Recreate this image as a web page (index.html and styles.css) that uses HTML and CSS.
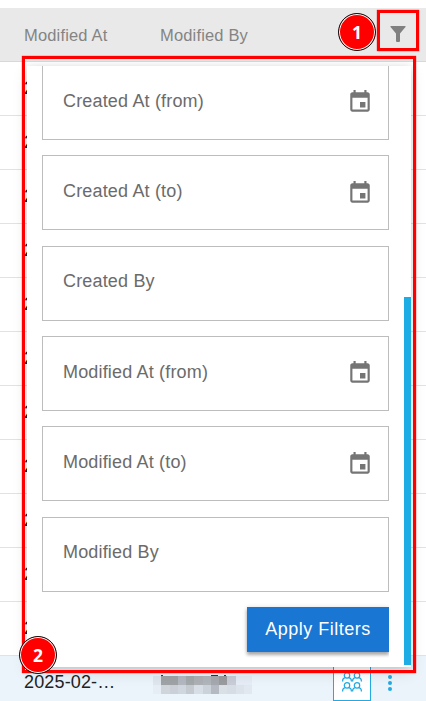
FILE: index.html
```html
<!DOCTYPE html>
<html lang="en">
<head>
<meta charset="utf-8">
<title>Filters</title>
<link rel="stylesheet" href="styles.css">
</head>
<body>
<svg class="defs" aria-hidden="true">
  <symbol id="calendar" viewBox="0 0 24 24"><path d="M17 12h-5v5h5v-5zM16 1v2H8V1H6v2H5c-1.11 0-1.99.9-1.99 2L3 19c0 1.1.89 2 2 2h14c1.1 0 2-.9 2-2V5c0-1.1-.9-2-2-2h-1V1h-2zm3 18H5V8h14v11z"/></symbol>
  <symbol id="person" viewBox="0 0 10 10"><circle cx="5" cy="3.4" r="2.7"/><path d="M.6 9.6V9c0-1.8 1-3 2.8-3.3M9.4 9.6V9c0-1.8-1-3-2.8-3.3"/></symbol>
</svg>
<main class="page">
  <header class="head">
    <span class="col">Modified At</span><span class="col">Modified By</span>
    <svg class="funnel" viewBox="0 0 16 16"><path d="M1 0h14q1 0 .5 1L10 7.5V15q0 1-1 1H7q-1 0-1-1V7.5L.5 1Q0 0 1 0z"/></svg>
  </header>
  <div class="row">2025</div><div class="row">2025</div><div class="row">2025</div><div class="row">2025</div>
  <div class="row">2025</div><div class="row">2025</div><div class="row">2025</div><div class="row">2025</div>
  <div class="row">2025</div><div class="row">2025</div><div class="row">2025</div>
  <div class="row selected">
    <span class="date">2025-02-…</span>
    <svg class="redacted" viewBox="0 0 99 19" shape-rendering="crispEdges">
      <path fill="#333" d="M8 -1h2v1H8zM58 -1h7v1h-7zM71 -1h2v1h-2z"/>
      <path fill="#dfe6ee" d="M0 0h8v9H0z"/><path fill="#9fa3a6" d="M8 0h17v9H8z"/><path fill="#b2b7c0" d="M25 0h8v9h-8z"/><path fill="#a3a8aa" d="M33 0h8v9h-8z"/><path fill="#adb1b6" d="M41 0h9v9h-9z"/><path fill="#b0b5bb" d="M50 0h8v9h-8z"/><path fill="#a5a9af" d="M58 0h8v9h-8z"/><path fill="#9a9b9f" d="M66 0h8v9h-8z"/><path fill="#c8ccd6" d="M74 0h9v9h-9z"/><path fill="#e6ecf6" d="M83 0h16v9H83z"/>
      <path fill="#e6edf5" d="M0 9h8v9H0z"/><path fill="#d0d5dc" d="M8 9h9v9H8z"/><path fill="#cbd0d8" d="M17 9h8v9h-8z"/><path fill="#d0d6dd" d="M25 9h8v9h-8z"/><path fill="#c5cad1" d="M33 9h8v9h-8z"/><path fill="#d7dee5" d="M41 9h9v9h-9z"/><path fill="#ccd2d9" d="M50 9h8v9h-8z"/><path fill="#b5b9c1" d="M58 9h8v9h-8z"/><path fill="#d9e1e6" d="M66 9h8v9h-8z"/><path fill="#d6dde4" d="M74 9h9v9h-9z"/><path fill="#dce3eb" d="M83 9h8v9h-8z"/><path fill="#e1e8f0" d="M91 9h8v9h-8z"/>
    </svg>
    <span class="people"><svg viewBox="0 0 20 20"><use href="#person" width="10" height="10"/><use href="#person" x="10" width="10" height="10"/><use href="#person" y="10" width="10" height="10"/><use href="#person" x="10" y="10" width="10" height="10"/></svg></span>
    <span class="more"><i></i><i></i><i></i></span>
  </div>
  <section class="panel">
    <div class="fields">
      <div class="field"><span>Created At (from)</span><svg class="cal"><use href="#calendar"/></svg></div>
      <div class="field"><span>Created At (to)</span><svg class="cal"><use href="#calendar"/></svg></div>
      <div class="field"><span>Created By</span></div>
      <div class="field"><span>Modified At (from)</span><svg class="cal"><use href="#calendar"/></svg></div>
      <div class="field"><span>Modified At (to)</span><svg class="cal"><use href="#calendar"/></svg></div>
      <div class="field"><span>Modified By</span></div>
      <button class="apply">Apply Filters</button>
    </div>
    <div class="thumb"></div>
  </section>
  <div class="frame frame-panel"></div>
  <div class="frame frame-icon"></div>
  <div class="badge one">1</div>
  <div class="badge two">2</div>
</main>
</body>
</html>
```
FILE: styles.css
```css
* { box-sizing: border-box; }
body { margin: 0; font-family: "Liberation Sans", Arial, sans-serif; background: #fff; }
.defs { position: absolute; width: 0; height: 0; }
.page { position: relative; width: 426px; height: 701px; padding-top: 8px; overflow: hidden; }
.head { display: flex; align-items: center; height: 54px; padding-left: 24px; background: #e9e9e9; border-bottom: 1px solid #d8d8d8; font-size: 16.5px; letter-spacing: .16px; color: #848484; }
.col { width: 136px; padding-top: 1px; }
.funnel { width: 16px; height: 16px; margin-left: 94px; fill: #808080; position: relative; top: -1px; }
.row { height: 54px; padding-left: 24px; line-height: 53px; border-bottom: 1px solid #e2e2e2; font-size: 18px; color: #222; }
.selected { display: flex; height: 54px; background: #ebf3fb; }
.date { width: 129px; letter-spacing: .15px; }
.redacted { width: 99px; height: 19px; margin-top: 20px; overflow: visible; }
.people { display: flex; justify-content: center; width: 38px; height: 45px; margin-left: 81px; padding-top: 15px; background: #fff; border: 1px solid #22aae2; }
.people svg { width: 20px; height: 20px; fill: none; stroke: #22aae2; stroke-width: 1.2; }
.more { display: flex; flex-direction: column; gap: 2px; margin: 19px 0 0 17px; }
.more i { width: 4px; height: 4px; border-radius: 50%; background: #22aae2; }
.panel { position: absolute; left: 27px; top: 66px; width: 384px; height: 601px; display: flex; justify-content: space-between; background: #fff; box-shadow: 0 5px 14px rgba(0,0,0,.13), 0 1px 7px rgba(0,0,0,.1); }
.fields { display: flex; flex-direction: column; justify-content: flex-end; gap: 15.35px; width: 362px; padding: 0 0 15px 15px; overflow: hidden; }
.field { display: flex; flex: none; justify-content: space-between; align-items: center; width: 347px; height: 75px; padding: 0 15px 0 20px; border: 1px solid #bdbdbd; color: #6b6b6b; font-size: 18px; letter-spacing: .17px; }
.field span { position: relative; top: -1.4px; }
.cal { width: 26px; height: 26px; fill: #757575; }
.apply { flex: none; align-self: flex-end; width: 142px; height: 45px; padding: 0; border: 0; background: #1976d2; color: #fff; font: 18px "Liberation Sans", Arial, sans-serif; letter-spacing: .5px; box-shadow: 0 3px 3px rgba(0,0,0,.25), 0 1px 5px rgba(0,0,0,.2); }
.thumb { align-self: flex-end; width: 7px; height: 368px; margin-bottom: 2px; background: #1dace4; }
.frame { position: absolute; border: 3px solid #f00; box-shadow: 0 0 1px #f00; }
.frame-panel { left: 22px; top: 56px; width: 394px; height: 617px; }
.frame-icon { left: 377px; top: 10px; width: 42px; height: 41px; }
.badge { position: absolute; width: 38px; height: 38px; border: 1px solid #111; border-radius: 50%; background: #f00; box-shadow: inset 0 0 0 1px #fff; color: #fff; font: bold 17.5px/36px "Open Sans", sans-serif; text-align: center; }
.one { left: 338px; top: 13px; }
.two { left: 19px; top: 636px; }
```
